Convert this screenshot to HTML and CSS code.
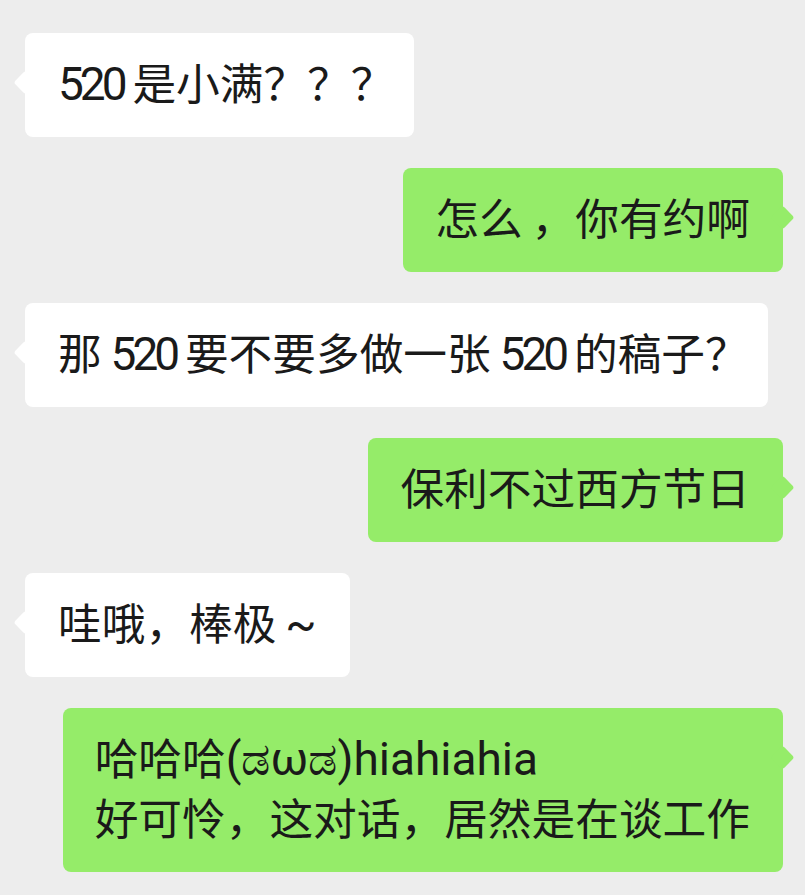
FILE: index.html
```html
<!DOCTYPE html>
<html lang="zh">
<head>
  <meta charset="UTF-8">
  <title>Chat</title>
  <link rel="stylesheet" href="styles.css">
</head>
<body>

  <div class="chat">

    <div class="row left">
      <div class="bubble"><span class="num">520</span> 是小满？？<span class="end">？</span></div>
    </div>

    <div class="row right">
      <div class="bubble">怎么 ，你有约啊</div>
    </div>

    <div class="row left">
      <div class="bubble">那 <span class="num">520</span> 要不要多做一张 <span class="num">520</span> 的稿子<span class="end">？</span></div>
    </div>

    <div class="row right">
      <div class="bubble">保利不过西方节日</div>
    </div>

    <div class="row left">
      <div class="bubble">哇哦，棒极 <span class="en">~</span></div>
    </div>

    <div class="row right">
      <div class="bubble">哈哈哈<span class="en">(ಡωಡ)hiahiahia</span><br>好可怜，这对话，居然是在谈工作</div>
    </div>

  </div>

</body>
</html>
```

FILE: styles.css
```css
body {
  margin: 0;
  background: #ededed;
  font-family: Roboto, "Noto Sans CJK SC", "Noto Sans", sans-serif;
  color: #1a1a1a;
}
.chat {
  display: flex;
  flex-direction: column;
  gap: 31px;
  padding: 33px 22px 20px 25px;
}
.row {
  display: flex;
}
.row.right {
  justify-content: flex-end;
}
.bubble {
  position: relative;
  background: #fff;
  border-radius: 8px;
  padding: 22px 33px 22px 33px;
  font-size: 43.7px;
  line-height: 60px;
  word-spacing: -2px;
  white-space: nowrap;
  text-spacing-trim: space-all;
}
.right .bubble {
  background: #95ec69;
  padding-left: 32px;
}
/* latin bits are a bit bigger in the app font */
.num {
  font-size: 46px;
  letter-spacing: -4px;
  line-height: 1;
}
.en {
  font-size: 46px;
  line-height: 1;
}
/* trailing punctuation is squeezed */
.end {
  margin-right: -14px;
}
/* little tail */
.bubble::before {
  content: "";
  position: absolute;
  top: 41px;
  width: 17px;
  height: 17px;
  border-radius: 3px;
  transform: rotate(45deg);
  background: inherit;
}
.left .bubble::before {
  left: -8px;
}
.right .bubble::before {
  right: -8px;
}
```
